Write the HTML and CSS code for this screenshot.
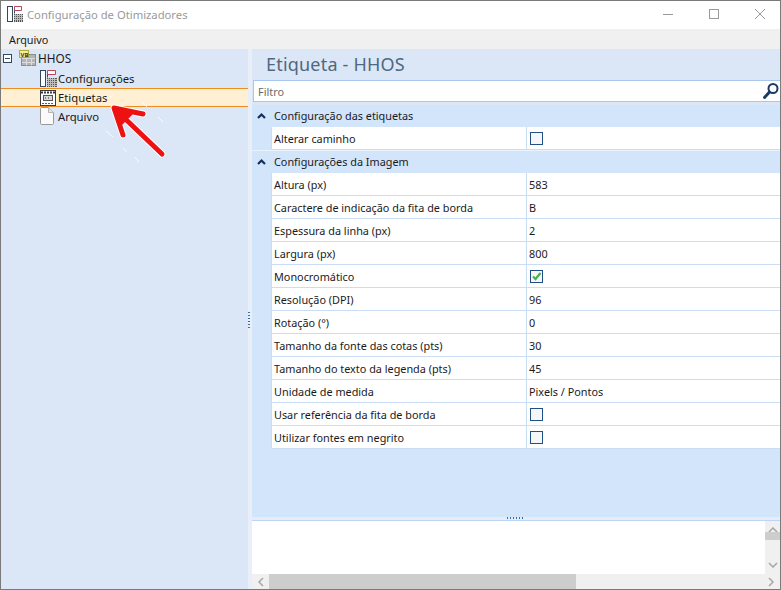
FILE: index.html
```html
<!DOCTYPE html>
<html>
<head>
  <meta charset="UTF-8" />
  <title>Configuração de Otimizadores</title>
  <link rel="stylesheet" href="styles.css">
</head>
<body>
  <div class="window">
    <div class="titlebar">
      <svg class="app-icon" width="16" height="16" viewBox="0 0 16 16">
        <rect x="0.5" y="0.5" width="5" height="15" fill="#fff" stroke="#33475f"/>
        <path d="M7.5 0.5h7v4h-7z" fill="#fff" stroke="#b5495b"/>
        <path d="M7.5 4.5v3" stroke="#33475f"/>
        <rect x="7" y="8" width="9" height="8" fill="#555"/>
        <path d="M8.5 8v8M10.5 8v8M12.5 8v8M14.5 8v8M7 9.5h9M7 11.5h9M7 13.5h9" stroke="#bdbdbd"/>
      </svg>
      <span class="title">Configuração de Otimizadores</span>
      <div class="window-buttons">
        <svg width="12" height="12" viewBox="0 0 12 12"><path d="M1 6.5h10" stroke="#999"/></svg>
        <svg width="12" height="12" viewBox="0 0 12 12"><rect x="1.5" y="1.5" width="9" height="9" fill="none" stroke="#999"/></svg>
        <svg width="12" height="12" viewBox="0 0 12 12"><path d="M1 1l10 10M11 1L1 11" stroke="#999"/></svg>
      </div>
    </div>
    <div class="menubar"><span>Arquivo</span></div>

    <div class="main">
      <div class="tree">
        <div class="tree-row root">
          <span class="expander"></span>
          <span class="icon-slot">
            <svg width="17" height="16" viewBox="0 0 17 16">
              <rect x="2.5" y="4.5" width="14" height="11" fill="#b4b4b4" stroke="#8c8c8c"/>
              <path d="M3 8.5h13M3 12.5h13M7.5 8.5v7M12.5 8.5v7" stroke="#dcdcdc"/>
              <rect x="0.5" y="0.5" width="9" height="7" fill="#f5ec9a" stroke="#b4a93a"/>
              <text x="1.5" y="6.5" class="icon-text">VB</text>
            </svg>
          </span>
          <span class="root-name">HHOS</span>
        </div>
        <div class="tree-row child">
          <span class="icon-slot">
            <svg width="17" height="17" viewBox="0 0 17 17">
              <rect x="0.5" y="0.5" width="5" height="16" fill="#fff" stroke="#33475f"/>
              <path d="M7.5 0.5h8v4h-8z" fill="#fff" stroke="#b5495b"/>
              <path d="M7.5 4.5v3" stroke="#33475f"/>
              <rect x="7" y="8" width="10" height="9" fill="#555"/>
              <path d="M8.5 8v9M10.5 8v9M12.5 8v9M14.5 8v9M7 9.5h10M7 11.5h10M7 13.5h10M7 15.5h10" stroke="#bdbdbd"/>
            </svg>
          </span>
          <span>Configurações</span>
        </div>
        <div class="tree-row child selected">
          <span class="icon-slot">
            <svg width="16" height="16" viewBox="0 0 16 16">
              <rect x="0.5" y="0.5" width="15" height="15" fill="#fff" stroke="#3a3a3a"/>
              <path d="M1 2.5h14" stroke="#3a3a3a" stroke-width="2" stroke-dasharray="2 1"/>
              <rect x="3.5" y="5.5" width="9" height="5" fill="#d9d9d9" stroke="#555"/>
              <path d="M5 8h1M8 8h1" stroke="#333"/>
              <path d="M2 13.5h12" stroke="#d03030" stroke-dasharray="2 1"/>
            </svg>
          </span>
          <span>Etiquetas</span>
        </div>
        <div class="tree-row child last">
          <span class="icon-slot">
            <svg width="14" height="18" viewBox="0 0 14 18">
              <path d="M0.5 1.5a1 1 0 0 1 1-1h7l5 5v11a1 1 0 0 1-1 1h-11a1 1 0 0 1-1-1z" fill="#fafafa" stroke="#9a9a9a"/>
              <path d="M8.5 0.5v5h5" fill="#e4e4e4" stroke="#b5b5b5"/>
            </svg>
          </span>
          <span>Arquivo</span>
        </div>
      </div>

      <div class="splitter"><span class="grip"></span></div>

      <div class="content">
        <h1>Etiqueta - HHOS</h1>
        <div class="filter">
          <span>Filtro</span>
          <svg width="18" height="18" viewBox="0 0 18 18">
            <circle cx="11" cy="6.5" r="4.5" fill="none" stroke="#1d3a63" stroke-width="2"/>
            <path d="M7.5 10L2.5 15.5" stroke="#1d3a63" stroke-width="3" stroke-linecap="round"/>
          </svg>
        </div>

        <div class="grid-area">
          <div class="group">
            <svg class="chevron" width="9" height="7" viewBox="0 0 9 7"><path d="M1 6l3.5-3.5L8 6" fill="none" stroke="#15315a" stroke-width="2.2"/></svg>
            <span>Configuração das etiquetas</span>
          </div>
          <div class="row"><div class="label">Alterar caminho</div><div class="value"><span class="check"></span></div></div>

          <div class="group second">
            <svg class="chevron" width="9" height="7" viewBox="0 0 9 7"><path d="M1 6l3.5-3.5L8 6" fill="none" stroke="#15315a" stroke-width="2.2"/></svg>
            <span>Configurações da Imagem</span>
          </div>
          <div class="row"><div class="label">Altura (px)</div><div class="value">583</div></div>
          <div class="row"><div class="label">Caractere de indicação da fita de borda</div><div class="value">B</div></div>
          <div class="row"><div class="label">Espessura da linha (px)</div><div class="value">2</div></div>
          <div class="row"><div class="label">Largura (px)</div><div class="value">800</div></div>
          <div class="row">
            <div class="label">Monocromático</div>
            <div class="value">
              <span class="check">
                <svg width="11" height="11" viewBox="0 0 11 11"><path d="M2 5.5l2.5 2.5 5-6" fill="none" stroke="#4caf50" stroke-width="2.2"/></svg>
              </span>
            </div>
          </div>
          <div class="row"><div class="label">Resolução (DPI)</div><div class="value">96</div></div>
          <div class="row"><div class="label">Rotação (°)</div><div class="value">0</div></div>
          <div class="row"><div class="label">Tamanho da fonte das cotas (pts)</div><div class="value">30</div></div>
          <div class="row"><div class="label">Tamanho do texto da legenda (pts)</div><div class="value">45</div></div>
          <div class="row"><div class="label">Unidade de medida</div><div class="value">Pixels / Pontos</div></div>
          <div class="row"><div class="label">Usar referência da fita de borda</div><div class="value"><span class="check"></span></div></div>
          <div class="row"><div class="label">Utilizar fontes em negrito</div><div class="value"><span class="check"></span></div></div>
        </div>

        <div class="h-splitter"><span class="h-grip"></span></div>

        <div class="description">
          <div class="desc-body">
            <div class="desc-text"></div>
            <div class="v-scroll">
              <svg width="10" height="6" viewBox="0 0 10 6"><path d="M1 5l4-4 4 4" fill="none" stroke="#a6a6a6" stroke-width="1.5"/></svg>
              <span class="v-thumb"></span>
              <svg width="10" height="6" viewBox="0 0 10 6"><path d="M1 1l4 4 4-4" fill="none" stroke="#a6a6a6" stroke-width="1.5"/></svg>
            </div>
          </div>
          <div class="h-scroll">
            <svg width="6" height="10" viewBox="0 0 6 10"><path d="M5 1L1 5l4 4" fill="none" stroke="#a6a6a6" stroke-width="1.5"/></svg>
            <span class="h-thumb"></span>
            <svg width="6" height="10" viewBox="0 0 6 10"><path d="M1 1l4 4-4 4" fill="none" stroke="#a6a6a6" stroke-width="1.5"/></svg>
          </div>
        </div>
      </div>
    </div>

    <svg class="arrow" width="70" height="80" viewBox="0 0 70 80">
      <path class="arrow-dash" d="M10 7l3-2M42 12l5 5M58 27l5 5M6 41l7 6M23 58l4 4M35 67l4 5"/>
      <path class="arrow-outline" d="M43 24L14 18L23 45M17 21L62 64"/>
      <path class="arrow-head" d="M14 18L34 23L21 36Z"/>
      <path class="arrow-line" d="M43 24L14 18L23 45M17 21L62 64"/>
    </svg>
  </div>
</body>
</html>
```

FILE: styles.css
```css
* {
  box-sizing: border-box;
}
body {
  margin: 0;
  font-family: "Noto Sans", "Open Sans", sans-serif;
  font-size: 10.85px;
  color: #1a1a1a;
}
.window {
  position: relative;
  width: 781px;
  height: 590px;
  display: flex;
  flex-direction: column;
  border: 1px solid #7a7a7a;
  background-color: white;
  overflow: hidden;
}
.titlebar {
  height: 28px;
  flex: none;
  display: flex;
  align-items: center;
  padding: 0 0 2px 6px;
}
.app-icon {
  margin-right: 4px;
}
.title {
  font-size: 11.25px;
  color: #9a9a9a;
}
.window-buttons {
  margin-left: auto;
  display: flex;
  gap: 34px;
  padding-right: 14px;
}
.menubar {
  height: 20px;
  flex: none;
  display: flex;
  align-items: center;
  padding-left: 8px;
  background-color: #f0f0f0;
}
.main {
  flex: 1;
  display: flex;
  min-height: 0;
  background-color: #f0f0f0;
}
.tree {
  width: 247px;
  flex: none;
  font-size: 11.3px;
  background-color: #dbe7f6;
}
.tree-row {
  height: 19px;
  display: flex;
  align-items: center;
}
.tree-row.root {
  height: 20px;
  padding: 0 0 2px 2px;
}
.tree-row.child {
  padding-left: 39px;
}
.tree-row.last {
  padding-bottom: 1px;
}
.root-name {
  margin-left: 1px;
  font-size: 11.8px;
}
.tree-row.selected {
  background-color: #fff0d3;
  border-top: 1px solid #f08a1d;
  border-bottom: 1px solid #f08a1d;
}
.expander {
  width: 9px;
  height: 9px;
  margin-right: 7px;
  border: 1px solid #33475f;
  background: linear-gradient(#33475f, #33475f) center / 5px 1px no-repeat, white;
}
.icon-slot {
  width: 18px;
  flex: none;
  display: flex;
  align-items: center;
}
.icon-text {
  font-size: 6px;
  font-weight: bold;
  fill: #333;
}
.splitter {
  width: 4px;
  flex: none;
  display: flex;
  align-items: center;
  background-color: #e9eff8;
}
.grip {
  width: 2px;
  height: 18px;
  margin-top: 4px;
  background: repeating-linear-gradient(#2f6db5 0 1px, transparent 1px 3px);
}
.content {
  flex: 1;
  min-width: 0;
  display: flex;
  flex-direction: column;
  background-color: #dbe7f6;
}
h1 {
  height: 31px;
  margin: 0;
  padding: 3px 0 0 14px;
  font-size: 18px;
  font-weight: normal;
  line-height: 24px;
  letter-spacing: 0.2px;
  color: #4f6881;
}
.filter {
  height: 22px;
  flex: none;
  margin-left: 1px;
  display: flex;
  align-items: center;
  justify-content: space-between;
  padding: 0 0 0 4px;
  background-color: white;
  border: 1px solid #a9c6ec;
  border-right: none;
  color: #6a6a6a;
}
.grid-area {
  flex: 1;
  min-height: 0;
  margin-top: 3px;
  background-color: #d3e5fb;
}
.group {
  height: 22px;
  padding-bottom: 2px;
  display: flex;
  align-items: center;
  background-color: #d3e5fb;
}
.group.second {
  height: 23px;
  border-top: 1px solid #eaf2fc;
}
.chevron {
  margin: 0 7px 0 5px;
}
.group span {
  margin-left: 1px;
}
.row {
  height: 23px;
  margin-left: 19px;
  display: grid;
  grid-template-columns: 255px 1fr;
  background-color: white;
  border-bottom: 1px solid #c9ddf5;
  border-left: 1px solid #c9ddf5;
}
.label {
  display: flex;
  align-items: center;
  padding-left: 2px;
  border-right: 1px solid #c9ddf5;
}
.value {
  display: flex;
  align-items: center;
  padding-left: 2px;
}
.check {
  width: 13px;
  height: 13px;
  margin-left: 1px;
  display: flex;
  align-items: center;
  justify-content: center;
  border: 1px solid #1f4f85;
  background-color: #f4f6f8;
}
.h-splitter {
  height: 4px;
  flex: none;
  display: flex;
  justify-content: center;
  background-color: #e6edf6;
  border-bottom: 1px solid #bcd6f8;
}
.h-grip {
  width: 18px;
  height: 2px;
  background: repeating-linear-gradient(90deg, #2f6db5 0 1px, transparent 1px 3px);
}
.description {
  height: 68px;
  flex: none;
  display: flex;
  flex-direction: column;
  background-color: white;
}
.desc-body {
  flex: 1;
  display: flex;
  min-height: 0;
}
.desc-text {
  flex: 1;
}
.v-scroll {
  width: 15px;
  flex: none;
  display: flex;
  flex-direction: column;
  align-items: center;
  justify-content: space-between;
  padding: 6px 0;
  background-color: #f0f0f0;
}
.v-thumb {
  width: 15px;
  height: 8px;
  margin-top: -15px;
  margin-bottom: 8px;
  background-color: #cdcdcd;
}
.h-scroll {
  height: 15px;
  flex: none;
  display: flex;
  align-items: center;
  padding: 0 6px;
  background-color: #f0f0f0;
}
.h-thumb {
  width: 307px;
  height: 15px;
  margin: 0 auto 0 5px;
  background-color: #cdcdcd;
}
.arrow {
  position: absolute;
  left: 99px;
  top: 89px;
}
.arrow-outline {
  fill: none;
  stroke: #fff;
  stroke-width: 7;
  stroke-linecap: round;
  stroke-linejoin: round;
}
.arrow-line {
  fill: none;
  stroke: #ee1111;
  stroke-width: 5;
  stroke-linecap: round;
  stroke-linejoin: round;
}
.arrow-head {
  fill: #ee1111;
}
.arrow-dash {
  fill: none;
  stroke: #fff;
  stroke-width: 1;
  stroke-opacity: 0.8;
}
```
